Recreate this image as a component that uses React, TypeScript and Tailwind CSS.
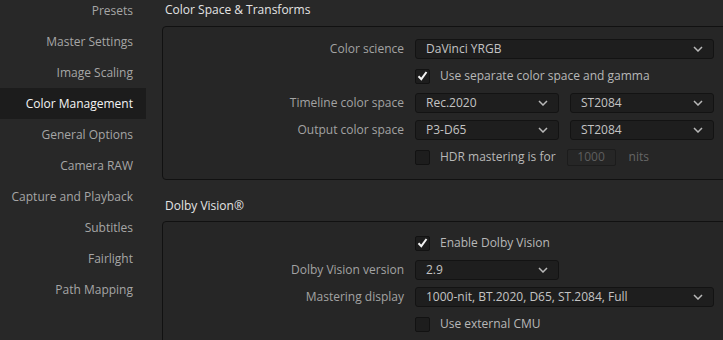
import React from "react";

const menu = [
  "Presets",
  "Master Settings",
  "Image Scaling",
  "Color Management",
  "General Options",
  "Camera RAW",
  "Capture and Playback",
  "Subtitles",
  "Fairlight",
  "Path Mapping",
];

const Chevron = () => (
  <svg width="10" height="6" viewBox="0 0 10 6" className="shrink-0">
    <path d="M1 1l4 4 4-4" fill="none" stroke="#b8b8b8" strokeWidth="1.5" />
  </svg>
);

const Select = ({ value, w }: { value: string; w: string }) => (
  <div
    className={`${w} h-[20px] flex items-center justify-between pl-[10px] pr-[10px] bg-[#1e1e1e] border border-[#131313] rounded-[3px] text-[#c4c4c4]`}
  >
    <span>{value}</span>
    <Chevron />
  </div>
);

const Check = ({ on }: { on?: boolean }) => (
  <div className="w-[15px] h-[15px] rounded-[2px] bg-[#1d1d1d] border border-[#121212] flex items-center justify-center">
    {on && (
      <svg width="11" height="10" viewBox="0 0 11 10">
        <path d="M1.5 5.2l2.8 3L9.5 1" fill="none" stroke="#f2f2f2" strokeWidth="2" />
      </svg>
    )}
  </div>
);

const Row = ({ label, children }: { label?: string; children: React.ReactNode }) => (
  <div className="flex items-center h-[20px]">
    <div className="w-[252px] pr-[11px] text-right text-[#a3a3a3]">{label}</div>
    <div className="flex items-center gap-[11px]">{children}</div>
  </div>
);

const CheckRow = ({ on, text }: { on?: boolean; text: string }) => (
  <div className="flex items-center gap-[10px]">
    <Check on={on} />
    <span className="text-[#b8b8b8]">{text}</span>
  </div>
);

export default function App() {
  return (
    <div
      className="w-[723px] h-[340px] overflow-hidden flex bg-[#282828] text-[12px] leading-[16px]"
      style={{ fontFamily: '"Open Sans", "Noto Sans", sans-serif' }}
    >
      <div className="w-[162px] shrink-0 -mt-[5px]">
        {menu.map((m) => (
          <div
            key={m}
            className={`w-[146px] h-[31px] flex items-center justify-end pr-[13px] ${
              m === "Color Management" ? "bg-[#1c1c1c] text-[#f4f4f4]" : "text-[#a6a6a6]"
            }`}
          >
            {m}
          </div>
        ))}
      </div>
      <div className="flex-1 min-w-0">
        <div className="h-[26px] pt-[2px] pl-[3px] text-[#e4e4e4] font-medium">
          Color Space &amp; Transforms
        </div>
        <div className="w-[580px] border border-[#111] rounded-[4px] bg-[#262626] pt-[12px] pb-[12px] flex flex-col gap-[7px]">
          <Row label="Color science">
            <Select value="DaVinci YRGB" w="w-[299px]" />
          </Row>
          <Row>
            <CheckRow on text="Use separate color space and gamma" />
          </Row>
          <Row label="Timeline color space">
            <Select value="Rec.2020" w="w-[144px]" />
            <Select value="ST2084" w="w-[144px]" />
          </Row>
          <Row label="Output color space">
            <Select value="P3-D65" w="w-[144px]" />
            <Select value="ST2084" w="w-[144px]" />
          </Row>
          <Row>
            <CheckRow text="HDR mastering is for" />
            <div className="w-[49px] h-[17px] border border-[#1c1c1c] rounded-[2px] bg-[#262626] text-[#5e5e5e] flex items-center justify-center">
              1000
            </div>
            <span className="text-[#666] ml-[2px]">nits</span>
          </Row>
        </div>
        <div className="h-[41px] pt-[18px] pl-[3px] text-[#e4e4e4] font-medium">Dolby Vision®</div>
        <div className="w-[580px] border border-[#111] rounded-[4px] bg-[#262626] pt-[11px] pb-[12px] flex flex-col gap-[7px]">
          <Row>
            <CheckRow on text="Enable Dolby Vision" />
          </Row>
          <Row label="Dolby Vision version">
            <Select value="2.9" w="w-[144px]" />
          </Row>
          <Row label="Mastering display">
            <Select value="1000-nit, BT.2020, D65, ST.2084, Full" w="w-[299px]" />
          </Row>
          <Row>
            <CheckRow text="Use external CMU" />
          </Row>
        </div>
      </div>
    </div>
  );
}
